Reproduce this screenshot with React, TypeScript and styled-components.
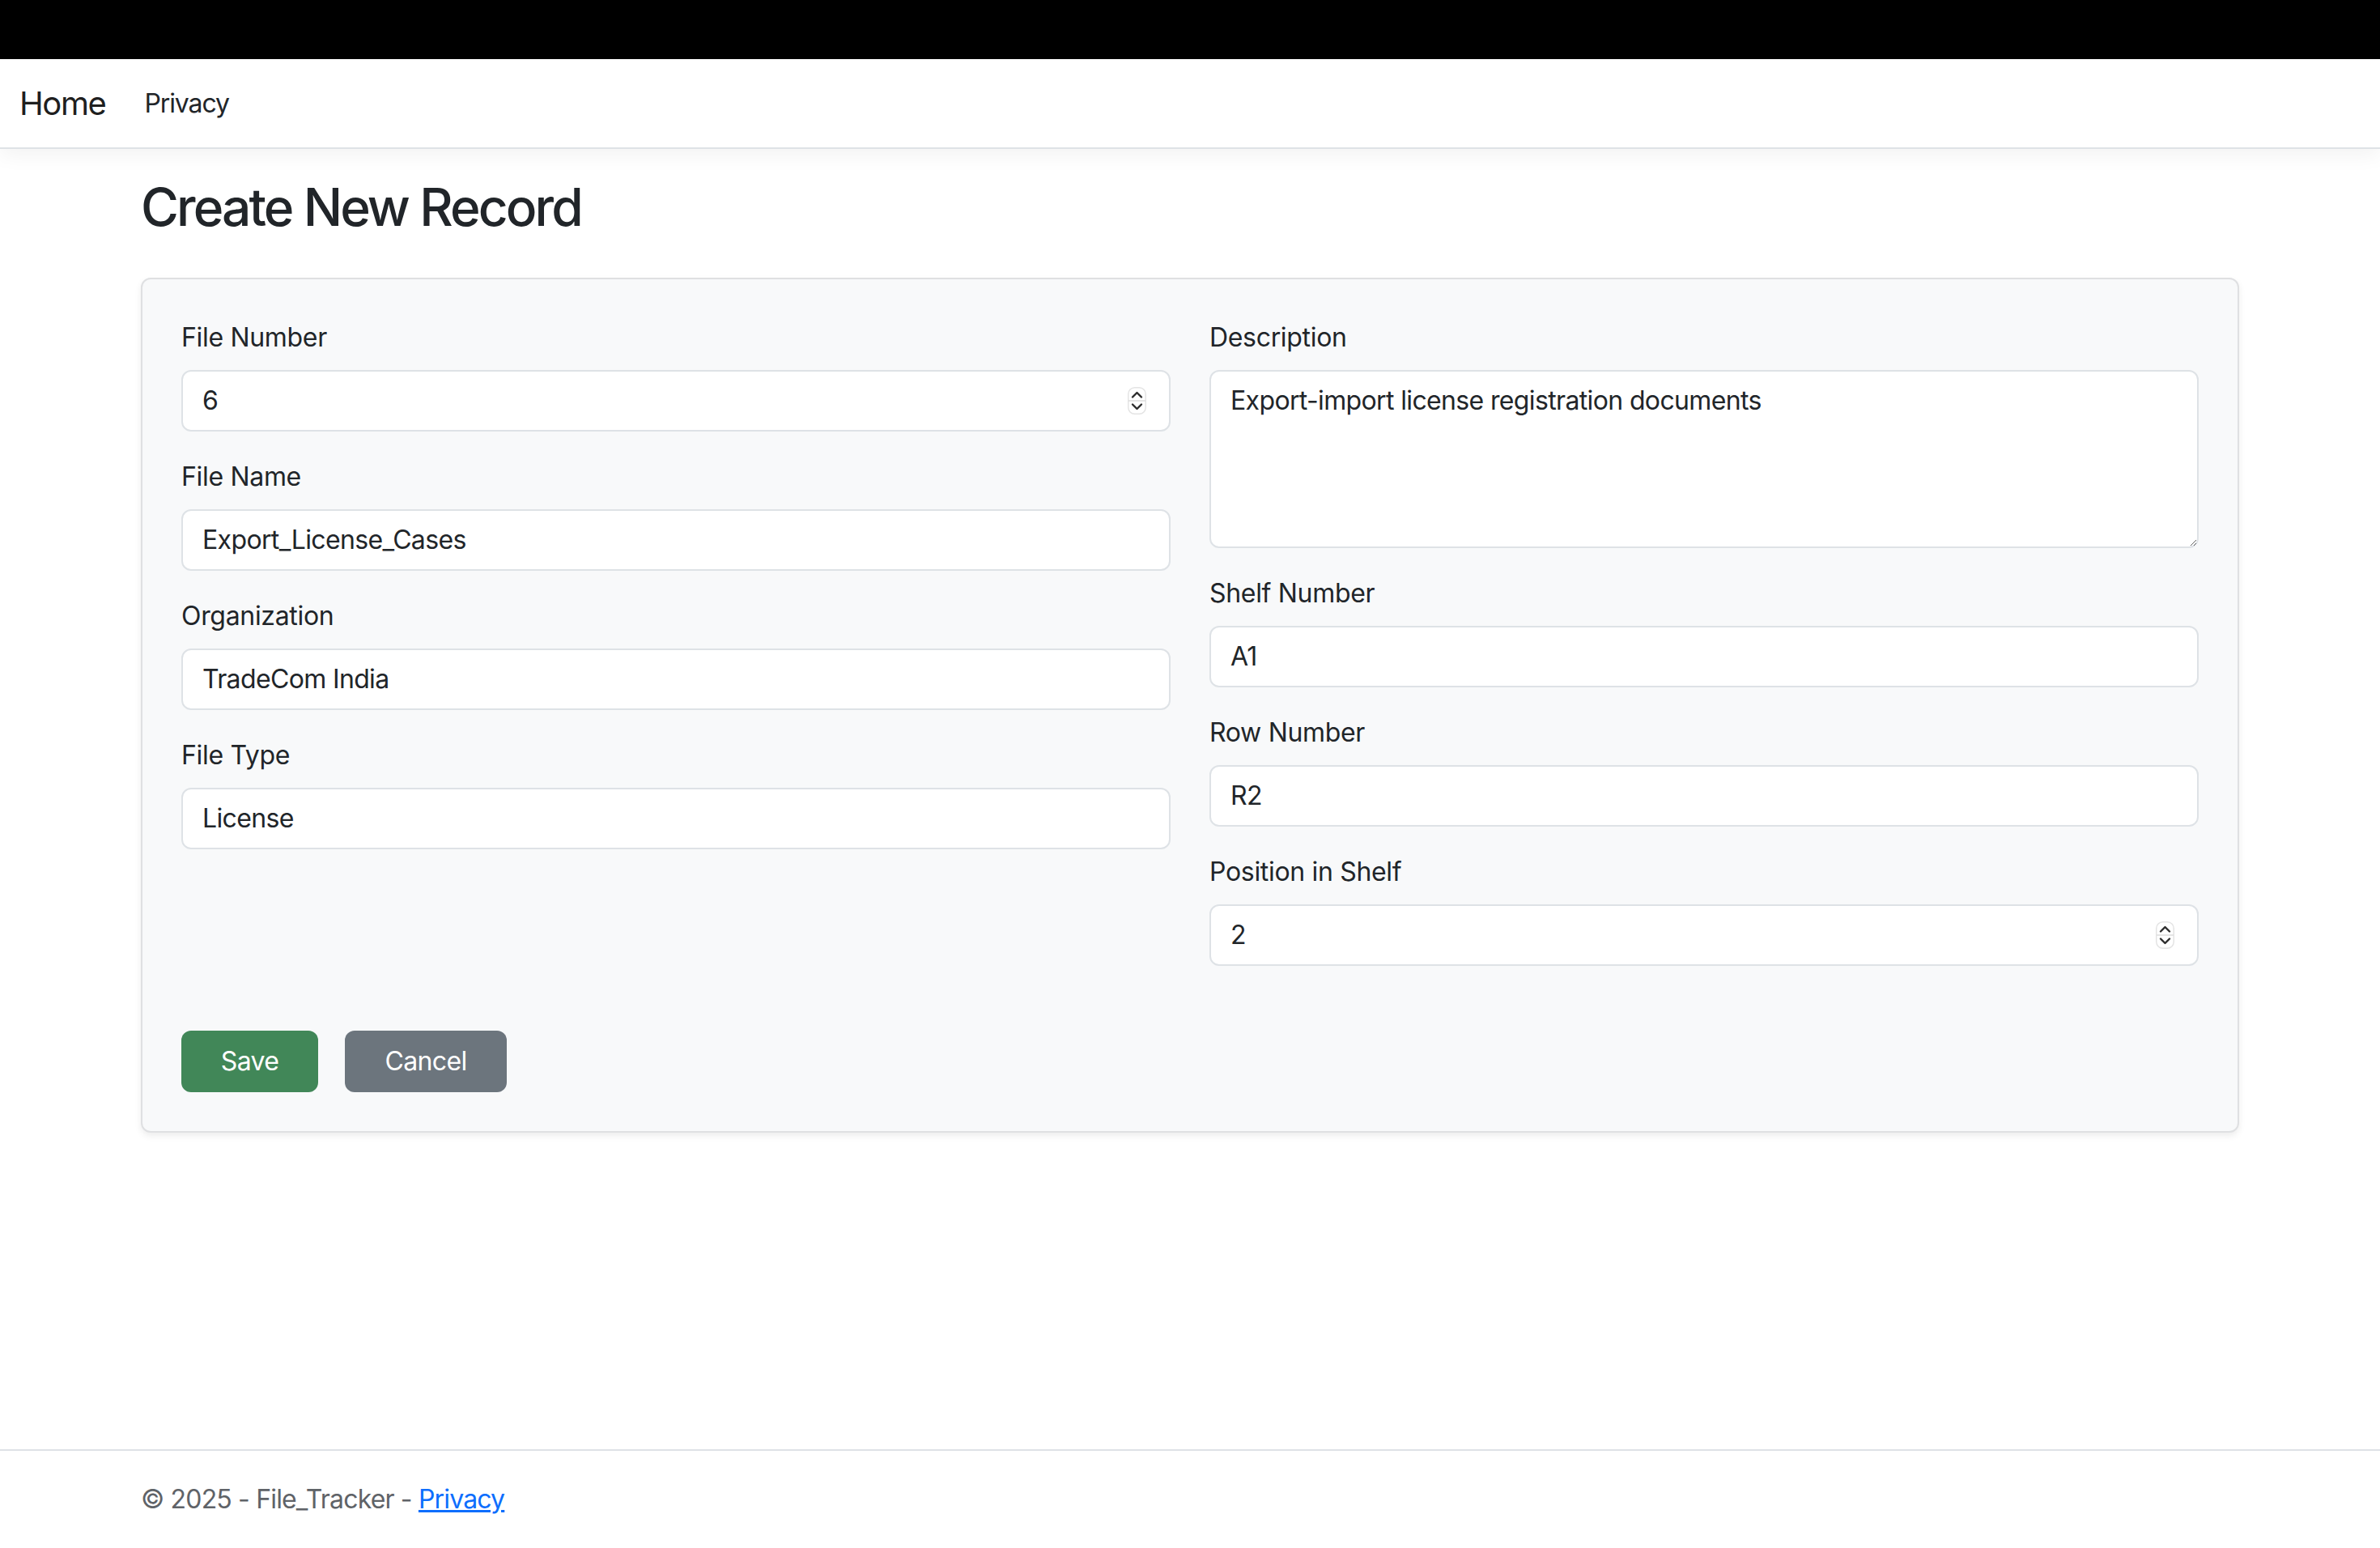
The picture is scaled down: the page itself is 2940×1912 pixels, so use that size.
import styled, { createGlobalStyle } from 'styled-components'

const GlobalStyle = createGlobalStyle`
  * {
    box-sizing: border-box;
  }
  body {
    margin: 0;
    background: #fff;
    color: #212529;
    font-family: Inter, 'Noto Sans', 'Liberation Sans', sans-serif;
    letter-spacing: -0.02em;
  }
`

const colors = {
  text: '#212529',
  muted: '#5f6368',
  border: '#dee2e6',
  light: '#f8f9fa',
  success: '#418758',
  secondary: '#6c757d',
  link: '#0d6efd',
}

const Page = styled.div`
  display: flex;
  flex-direction: column;
  min-height: 100vh;
`

const TopStrip = styled.div`
  height: 73px;
  background: #000;
`

const Navbar = styled.nav`
  height: 111px;
  display: flex;
  align-items: center;
  padding: 0 24px;
  background: #fff;
  border-bottom: 2px solid ${colors.border};
  box-shadow: 0 8px 24px rgba(0, 0, 0, 0.05);
`

const Brand = styled.a`
  font-size: 40px;
  line-height: 1.5;
  letter-spacing: -0.035em;
  color: rgba(0, 0, 0, 0.9);
  text-decoration: none;
  margin-right: 32px;
`

const NavLink = styled.a`
  font-size: 32px;
  line-height: 1.5;
  letter-spacing: -0.035em;
  padding: 0 16px;
  color: ${colors.text};
  text-decoration: none;
`

const Main = styled.main`
  width: 2592px;
  margin: 0 auto;
  padding: 34px 0 32px;
`

const Title = styled.h2`
  margin: 0 0 48px;
  font-size: 64px;
  font-weight: 500;
  line-height: 1.2;
  letter-spacing: -0.045em;
`

const Card = styled.form`
  background: ${colors.light};
  border: 2px solid #dfe0e2;
  border-radius: 12px;
  padding: 48px;
  box-shadow: 0 4px 8px rgba(0, 0, 0, 0.075);
`

const FieldGrid = styled.div`
  display: grid;
  grid-template-columns: 1fr 1fr;
  column-gap: 48px;
`

const Column = styled.div`
  display: flex;
  flex-direction: column;
`

const Group = styled.div`
  margin-bottom: 32px;
`

const Label = styled.label`
  display: block;
  font-size: 32px;
  line-height: 1.5;
  margin-bottom: 16px;
`

const fieldBase = `
  width: 100%;
  background: #fff;
  border: 2px solid ${colors.border};
  border-radius: 12px;
  font-family: inherit;
  font-size: 32px;
  line-height: 1.5;
  letter-spacing: -0.02em;
  color: ${colors.text};
`

const Input = styled.input`
  ${fieldBase}
  display: block;
  height: 76px;
  padding: 12px 24px;
  outline: none;
`

const TextArea = styled.textarea`
  ${fieldBase}
  display: block;
  height: 220px;
  padding: 12px 24px;
  resize: vertical;
  outline: none;
`

const NumberBox = styled.div`
  ${fieldBase}
  height: 76px;
  display: flex;
  align-items: center;
  padding: 0 28px 0 24px;
`

const BareInput = styled.input`
  flex: 1;
  min-width: 0;
  border: none;
  outline: none;
  background: transparent;
  padding: 0;
  font: inherit;
  letter-spacing: inherit;
  color: inherit;
`

const Actions = styled.div`
  display: flex;
  gap: 33px;
  margin-top: 48px;
`

const Button = styled.button<{ $bg: string; $width: number }>`
  width: ${(p) => p.$width}px;
  height: 76px;
  border: none;
  border-radius: 12px;
  background: ${(p) => p.$bg};
  color: #fff;
  font-family: inherit;
  font-size: 32px;
  line-height: 1.5;
  letter-spacing: -0.02em;
  padding: 0;
`

const Footer = styled.footer`
  margin-top: auto;
  border-top: 2px solid ${colors.border};
  height: 122px;
`

const FooterInner = styled.div`
  width: 2592px;
  margin: 0 auto;
  line-height: 120px;
  font-size: 32px;
  letter-spacing: -0.026em;
  color: ${colors.muted};
  white-space: nowrap;
`

const FooterLink = styled.a`
  color: ${colors.link};
  text-decoration: underline;
`

function Spinner() {
  return (
    <svg width="23" height="34" viewBox="0 0 23 34">
      <rect x="0.75" y="0.75" width="21.5" height="32.5" rx="8" fill="#fff" stroke="#e4e4e4" strokeWidth="1.5" />
      <line x1="1" y1="17" x2="22" y2="17" stroke="#dcdcdc" strokeWidth="1.5" />
      <polyline points="6,12.5 11.5,7 17,12.5" fill="none" stroke="#2b2b2b" strokeWidth="2.4" strokeLinecap="round" strokeLinejoin="round" />
      <polyline points="6,21.5 11.5,27 17,21.5" fill="none" stroke="#2b2b2b" strokeWidth="2.4" strokeLinecap="round" strokeLinejoin="round" />
    </svg>
  )
}

interface FieldProps {
  label: string
  value: string
}

function TextField({ label, value }: FieldProps) {
  return (
    <Group>
      <Label>{label}</Label>
      <Input type="text" defaultValue={value} />
    </Group>
  )
}

function NumberField({ label, value }: FieldProps) {
  return (
    <Group>
      <Label>{label}</Label>
      <NumberBox>
        <BareInput type="text" inputMode="numeric" defaultValue={value} />
        <Spinner />
      </NumberBox>
    </Group>
  )
}

function App() {
  return (
    <Page>
      <GlobalStyle />
      <TopStrip />
      <Navbar>
        <Brand href="#">Home</Brand>
        <NavLink href="#">Privacy</NavLink>
      </Navbar>

      <Main>
        <Title>Create New Record</Title>
        <Card onSubmit={(e) => e.preventDefault()}>
          <FieldGrid>
            <Column>
              <NumberField label="File Number" value="6" />
              <TextField label="File Name" value="Export_License_Cases" />
              <TextField label="Organization" value="TradeCom India" />
              <TextField label="File Type" value="License" />
            </Column>
            <Column>
              <Group>
                <Label>Description</Label>
                <TextArea rows={4} defaultValue="Export-import license registration documents" />
              </Group>
              <TextField label="Shelf Number" value="A1" />
              <TextField label="Row Number" value="R2" />
              <NumberField label="Position in Shelf" value="2" />
            </Column>
          </FieldGrid>
          <Actions>
            <Button type="submit" $bg={colors.success} $width={169}>
              Save
            </Button>
            <Button type="button" $bg={colors.secondary} $width={200}>
              Cancel
            </Button>
          </Actions>
        </Card>
      </Main>

      <Footer>
        <FooterInner>
          © 2025 - File_Tracker - <FooterLink href="#">Privacy</FooterLink>
        </FooterInner>
      </Footer>
    </Page>
  )
}

export default App
